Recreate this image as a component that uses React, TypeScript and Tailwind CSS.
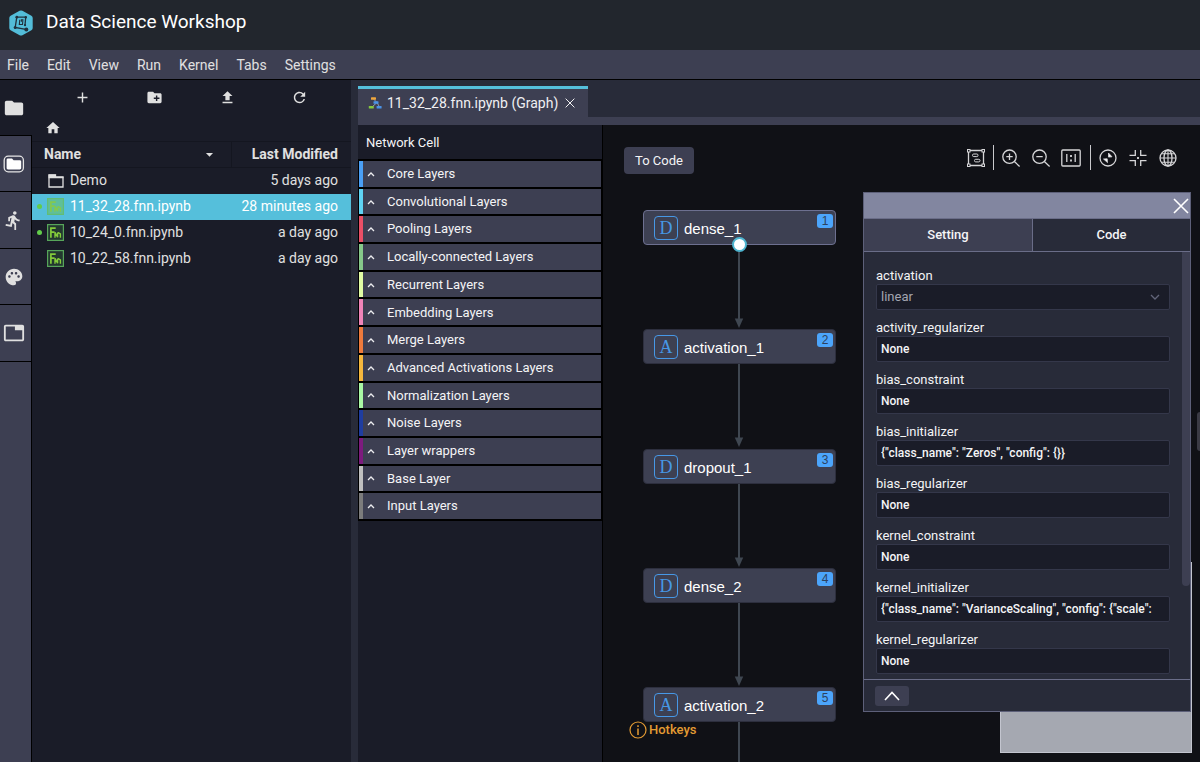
import React from "react";
import {
  MdAdd,
  MdArrowDropDown,
  MdCreateNewFolder,
  MdDirectionsRun,
  MdFileUpload,
  MdFolder,
  MdHome,
  MdPalette,
  MdRefresh,
  MdTab,
} from "react-icons/md";

const menus = ["File", "Edit", "View", "Run", "Kernel", "Tabs", "Settings"];

const files = [
  { name: "Demo", modified: "5 days ago", kind: "folder", running: false, selected: false },
  { name: "11_32_28.fnn.ipynb", modified: "28 minutes ago", kind: "fnn", running: true, selected: true },
  { name: "10_24_0.fnn.ipynb", modified: "a day ago", kind: "fnn", running: true, selected: false },
  { name: "10_22_58.fnn.ipynb", modified: "a day ago", kind: "fnn", running: false, selected: false },
];

const layers = [
  { name: "Core Layers", stripe: "bg-[#4a9ff5]" },
  { name: "Convolutional Layers", stripe: "bg-[#5fd3f3]" },
  { name: "Pooling Layers", stripe: "bg-[#ea4f66]" },
  { name: "Locally-connected Layers", stripe: "bg-[#86c88a]" },
  { name: "Recurrent Layers", stripe: "bg-[#e0fba4]" },
  { name: "Embedding Layers", stripe: "bg-[#f084b8]" },
  { name: "Merge Layers", stripe: "bg-[#ee7a3c]" },
  { name: "Advanced Activations Layers", stripe: "bg-[#f5b73d]" },
  { name: "Normalization Layers", stripe: "bg-[#a9f7a4]" },
  { name: "Noise Layers", stripe: "bg-[#1f3da0]" },
  { name: "Layer wrappers", stripe: "bg-[#7d1b7e]" },
  { name: "Base Layer", stripe: "bg-[#bfbfbf]" },
  { name: "Input Layers", stripe: "bg-[#7c7c7c]" },
];

const nodes = [
  { label: "dense_1", letter: "D", place: "top-[85px]", selected: true },
  { label: "activation_1", letter: "A", place: "top-[204px]", selected: false },
  { label: "dropout_1", letter: "D", place: "top-[324px]", selected: false },
  { label: "dense_2", letter: "D", place: "top-[443px]", selected: false },
  { label: "activation_2", letter: "A", place: "top-[562px]", selected: false },
];

const fields = [
  { name: "activity_regularizer", value: "None" },
  { name: "bias_constraint", value: "None" },
  { name: "bias_initializer", value: '{"class_name": "Zeros", "config": {}}' },
  { name: "bias_regularizer", value: "None" },
  { name: "kernel_constraint", value: "None" },
  { name: "kernel_initializer", value: '{"class_name": "VarianceScaling", "config": {"scale":' },
  { name: "kernel_regularizer", value: "None" },
];

function Logo() {
  return (
    <svg className="h-[26px] w-[26px]" viewBox="0 0 26 26" aria-hidden="true">
      <path d="M11.6.8a3 3 0 0 1 2.8 0l9 5a2.6 2.6 0 0 1 1.3 2.3v9.8a2.6 2.6 0 0 1-1.3 2.3l-9 5a3 3 0 0 1-2.8 0l-9-5a2.6 2.6 0 0 1-1.300-2.300V8.100a2.600 2.600 0 0 1 1.300-2.300z" fill="#53bdd9" />
      <g fill="none" stroke="#20303c" strokeWidth="1.300">
        <path d="M8.800 7.200l-1.600 10.300 10.600 1.900M8.800 7.200h8.900l-.7 8" />
        <path d="M11.800 9.800l-.5 4.700h3.200l.4-4.700h-1.500v2" strokeWidth="1.100" />
      </g>
      <g fill="#20303c">
        <circle cx="8.800" cy="7.200" r="1.400" />
        <circle cx="17.800" cy="7.200" r="1.200" />
        <circle cx="7.200" cy="17.600" r="1.500" />
        <circle cx="18.300" cy="19.500" r="2" />
        <circle cx="17" cy="15.200" r="1.100" />
      </g>
    </svg>
  );
}

function FramedFolder() {
  return (
    <svg className="h-[18px] w-[22px]" viewBox="0 0 22 18" aria-hidden="true">
      <rect x="1.200" y="1.200" width="19.200" height="15.600" rx="4" fill="none" stroke="#e6e6e6" strokeWidth="1.300" />
      <path d="M5 3.600h4l1.600 1.600h6.200c.8 0 1.400.6 1.400 1.300v6.600c0 .8-.6 1.400-1.400 1.400H5c-.8 0-1.400-.6-1.400-1.400V5c0-.8.6-1.400 1.400-1.400z" fill="#fff" />
    </svg>
  );
}

function OpenFolder() {
  return (
    <svg className="h-[14px] w-[16px]" viewBox="0 0 16 14" aria-hidden="true">
      <path d="M1 1h6.500v2H15v10H1z" fill="none" stroke="#e0e0e0" strokeWidth="1.300" />
      <path d="M.5.500h7.300v2.300h7.700v1.400H.5z" fill="#e0e0e0" />
    </svg>
  );
}

function FnnIcon({ faded }: { faded: boolean }) {
  return (
    <svg className="h-[17px] w-[17px]" viewBox="0 0 17 17" aria-hidden="true">
      <rect x=".6" y=".6" width="15.800" height="15.800" fill={faded ? "#5fbf9a" : "#23382f"} stroke={faded ? "#62bd74" : "#57a55a"} strokeWidth="1.200" />
      <g fill="none" stroke={faded ? "#84c94e" : "#84cc3b"} strokeWidth="1.700">
        <path d="M3.900 13.800V4.200h4.800M3.900 8.200h3.700" />
        <path d="M8 13.800V8.200l2.600 5V8.800M10.600 8.800h.8l2 1.200v3.800" strokeWidth="1.400" />
      </g>
    </svg>
  );
}

function GraphIcon() {
  return (
    <svg className="h-[14px] w-[14px]" viewBox="0 0 14 14" aria-hidden="true">
      <path d="M5 2.500l4 4M9 6.500L4 11M9 6.500l2.500 4.500" stroke="#8fa0b5" fill="none" />
      <rect x="3" y="1.200" width="5" height="2.600" rx=".6" fill="#f0a73c" />
      <rect x="5.500" y="5.200" width="5" height="2.600" rx=".6" fill="#4a93e8" />
      <rect x=".8" y="10" width="5" height="2.600" rx=".6" fill="#85c93f" />
      <rect x="8.600" y="10" width="5" height="2.600" rx=".6" fill="#4a93e8" />
    </svg>
  );
}

function Cross({ className }: { className: string }) {
  return (
    <svg className={className} viewBox="0 0 16 16" fill="none" stroke="currentColor" aria-hidden="true">
      <path d="M1 1l14 14M15 1L1 15" strokeWidth="1.600" />
    </svg>
  );
}

function ToolIcon({ label, children }: { label: string; children: React.ReactNode }) {
  return (
    <button type="button" aria-label={label} className="grid h-5 w-[22px] place-items-center">
      <svg className="h-5 w-[22px]" viewBox="0 0 22 20" fill="none" stroke="#d6d6d8" strokeWidth="1.300" aria-hidden="true">
        {children}
      </svg>
    </button>
  );
}

function CanvasTools() {
  return (
    <div className="absolute top-5 right-[21px] flex items-center">
      <ToolIcon label="Fit to canvas">
        <path d="M4 2.500h14M4 17.500h14M3.500 3v14M18.500 3v14" />
        <g fill="#101116" strokeWidth="1">
          <rect x="2.500" y="1.500" width="2.500" height="2.500" />
          <rect x="17" y="1.500" width="2.500" height="2.500" />
          <rect x="2.500" y="16" width="2.500" height="2.500" />
          <rect x="17" y="16" width="2.500" height="2.500" />
          <rect x="7.500" y="6" width="5.500" height="2.600" rx="1.200" />
          <rect x="9.500" y="11.300" width="5.500" height="2.600" rx="1.200" />
        </g>
      </ToolIcon>
      <span className="mx-1.5 h-[25px] w-px bg-[#c9c9cc]" />
      <div className="flex gap-2">
        <ToolIcon label="Zoom in">
          <circle cx="9.500" cy="8.700" r="6.700" />
          <path d="M14.400 13.500l5.200 5M6.300 8.700h6.400M9.500 5.500v6.400" />
        </ToolIcon>
        <ToolIcon label="Zoom out">
          <circle cx="9.500" cy="8.700" r="6.700" />
          <path d="M14.400 13.500l5.200 5M6.300 8.700h6.400" />
        </ToolIcon>
        <ToolIcon label="Actual size">
          <rect x="1.800" y="2" width="18.400" height="16" rx="1" />
          <path d="M6.800 6v8M15.200 6v8" />
          <path d="M11 7v2M11 11.500v2" strokeWidth="1.800" />
        </ToolIcon>
      </div>
      <span className="mr-1.5 ml-2 h-[25px] w-px bg-[#c9c9cc]" />
      <div className="flex gap-2">
        <ToolIcon label="Locate node">
          <circle cx="11" cy="10" r="8" />
          <path d="M11.500 5l3.500 3.800-3.500.3zM6.500 11l3.700-.2.300 3.800z" fill="#fff" strokeWidth=".8" />
        </ToolIcon>
        <ToolIcon label="Center">
          <path d="M2.500 7.300h5.800V2M13.700 2v5.300h5.800M2.500 12.700h5.800V18M13.700 18v-5.300h5.800" />
          <circle cx="11" cy="10" r="1" fill="#fff" stroke="none" />
        </ToolIcon>
        <ToolIcon label="Toggle map">
          <circle cx="11" cy="10" r="8" />
          <ellipse cx="11" cy="10" rx="4" ry="8" />
          <path d="M11 2v16M3 10h16M4.200 5.800h13.600M4.200 14.200h13.600" strokeWidth="1.100" />
        </ToolIcon>
      </div>
    </div>
  );
}

function FileBrowser() {
  return (
    <section className="flex w-[319px] shrink-0 flex-col bg-[#1a1c28] text-[14px] text-[#e0e0e0]">
      <div className="grid grid-cols-4 pt-2 pr-[15px] pl-[14px]">
        <button type="button" aria-label="New launcher" className="grid h-[18px] place-items-center"><MdAdd size={17} /></button>
        <button type="button" aria-label="New folder" className="grid h-[18px] place-items-center"><MdCreateNewFolder size={17} /></button>
        <button type="button" aria-label="Upload files" className="grid h-[18px] place-items-center"><MdFileUpload size={17} /></button>
        <button type="button" aria-label="Refresh" className="grid h-[18px] place-items-center"><MdRefresh size={17} /></button>
      </div>
      <div className="mt-[14px] pb-[5px] pl-[13px]">
        <a href="#home" aria-label="Home" className="block w-4"><MdHome size={16} /></a>
      </div>
      <table className="w-full table-fixed border-collapse">
        <thead>
          <tr className="h-[26px] border-y border-[#141620]">
            <th className="w-[199px] border-r border-[#141620] pr-[13px] pl-3 text-left font-bold">
              <span className="flex items-center justify-between">Name <MdArrowDropDown size={17} /></span>
            </th>
            <th className="pr-[13px] text-right font-bold">Last Modified</th>
          </tr>
        </thead>
        <tbody>
          {files.map((f) => (
            <tr key={f.name} className={f.selected ? "h-[26px] bg-[#55bfdb] text-white" : "h-[26px]"}>
              <td className="whitespace-nowrap">
                <span className="flex items-center pl-[5px]">
                  <span className={f.running ? "mr-[5px] h-[5px] w-[5px] rounded-full bg-[#62cc4a]" : "mr-[5px] h-[5px] w-[5px]"} />
                  <span className="mr-[6px] grid w-[17px] place-items-center">
                    {f.kind === "folder" ? <OpenFolder /> : <FnnIcon faded={f.selected} />}
                  </span>
                  {f.name}
                </span>
              </td>
              <td className="pr-[13px] text-right whitespace-nowrap">{f.modified}</td>
            </tr>
          ))}
        </tbody>
      </table>
    </section>
  );
}

function NetworkCell() {
  return (
    <section className="flex w-[245px] shrink-0 flex-col border-r border-black bg-[#1a1c28]">
      <h2 className="px-2 pt-2 pb-1.5 text-[13px] leading-5 text-[#f4f4f6]">Network Cell</h2>
      <ul className="grid h-[362px] auto-rows-fr border-y border-black">
        {layers.map((l) => (
          <li key={l.name} className="flex border border-black">
            <button type="button" className="flex w-full items-center bg-[#3d3f52] text-left text-[13px] text-[#f4f4f6]">
              <span className={`w-[4px] self-stretch ${l.stripe}`} />
              <svg className="mr-3 ml-1 h-2 w-2" viewBox="0 0 8 8" fill="none" stroke="#ededf0" strokeWidth="1.300" aria-hidden="true">
                <path d="M1 6l3-3 3 3" />
              </svg>
              {l.name}
            </button>
          </li>
        ))}
      </ul>
    </section>
  );
}

function SettingPanel() {
  const input = "h-[26px] w-full rounded-[2px] border border-[#34374a] bg-[#1a1c28] px-1";
  return (
    <aside className="absolute top-[67px] right-[9px] flex h-[520px] w-[328px] flex-col border border-[#5d6079] bg-[#282b39] text-[13px] text-[#f4f4f6]">
      <div className="flex h-[25px] items-center justify-end bg-[#8286a0] pr-px text-white">
        <button type="button" aria-label="Close panel"><Cross className="h-4 w-4" /></button>
      </div>
      <div className="flex h-[34px] border-y border-[#6a6d88]">
        <button type="button" className="w-[169px] border-r border-[#6a6d88] bg-[#3d3f52] font-medium">Setting</button>
        <button type="button" className="flex-1 font-medium">Code</button>
      </div>
      <div className="flex min-h-0 flex-1 overflow-hidden">
        <form className="flex-1 pt-4 pr-3 pl-3">
          <div className="mb-2.5">
            <label htmlFor="activation" className="block leading-4">activation</label>
            <div className="relative">
              <select id="activation" defaultValue="linear" className={`${input} block appearance-none text-[13px] text-[#a3a5b0]`}>
                <option>linear</option>
                <option>relu</option>
              </select>
              <svg className="pointer-events-none absolute top-2 right-2.5 h-2.5 w-2.5" viewBox="0 0 10 10" fill="none" stroke="#62657a" strokeWidth="1.300" aria-hidden="true">
                <path d="M1 3l4 4 4-4" />
              </svg>
            </div>
          </div>
          {fields.map((f) => (
            <div key={f.name} className="mb-2.5">
              <label htmlFor={f.name} className="block leading-4">{f.name}</label>
              <input id={f.name} type="text" defaultValue={f.value} className={`${input} block text-[12px] font-medium`} />
            </div>
          ))}
        </form>
        <div className="w-2">
          <div className="h-[334px] rounded-b bg-[#3d3f52]" />
        </div>
      </div>
      <div className="flex h-8 items-center border-t border-[#6a6d88] px-[11px]">
        <button type="button" aria-label="Collapse" className="grid h-5 w-[34px] place-items-center rounded-[3px] bg-[#3d3f52]">
          <svg className="h-4 w-4" viewBox="0 0 16 16" fill="none" stroke="#fff" strokeWidth="1.600" aria-hidden="true">
            <path d="M1 12l7-7.500L15 12" />
          </svg>
        </button>
      </div>
    </aside>
  );
}

function Arrow({ place }: { place: string }) {
  return (
    <svg className={`absolute left-[131px] h-[86px] w-[10px] ${place}`} viewBox="0 0 10 86" aria-hidden="true">
      <path d="M5 0v78" stroke="#3f4751" strokeWidth="2" />
      <path d="M.8 75.500h8.400L5 85z" fill="#3f4751" />
    </svg>
  );
}

function GraphCanvas() {
  return (
    <main className="relative min-w-0 flex-1 overflow-hidden bg-[#101116]">
      <button type="button" className="mt-[22px] ml-[21px] h-[27px] w-[70px] rounded bg-[#3d3f52] text-[13px] text-[#f4f4f6]">To Code</button>
      <CanvasTools />
      <Arrow place="top-[118px]" />
      <Arrow place="top-[237px]" />
      <Arrow place="top-[357px]" />
      <Arrow place="top-[476px]" />
      <Arrow place="top-[596px]" />
      {nodes.map((n, i) => (
        <div
          key={n.label}
          className={`absolute left-10 flex h-[35px] w-[193px] items-center rounded border bg-[#3d4052] pl-2.5 font-['Liberation_Sans',Arial,sans-serif] text-[15px] text-white ${n.place} ${n.selected ? "border-[#6d7090]" : "border-[#2d2f3e]"}`}
        >
          <span className="mr-1.5 grid h-6 w-6 place-items-center rounded border-[1px] border-[#4798e6] font-['Liberation_Serif',serif] text-[18px] leading-none text-[#4798e6]">{n.letter}</span>
          <span className="pt-[3px] leading-5">{n.label}</span>
          <span className="absolute top-[3px] right-0.5 grid h-[14px] w-4 place-items-center rounded-[3px] bg-[#4ca5fb] text-[12px] leading-none text-[#2c4260]">{i + 1}</span>
          {n.selected && <span className="absolute -bottom-2 left-[88px] h-[15px] w-[15px] rounded-full border-2 border-[#4db4cf] bg-white" />}
        </div>
      ))}
      <a href="#hotkeys" className="absolute top-[595px] left-[26px] flex items-center gap-0.5 text-[13px] font-medium text-[#e39b33]">
        <svg className="h-[18px] w-[18px]" viewBox="0 0 18 18" fill="none" stroke="#e39b33" strokeWidth="1.200" aria-hidden="true">
          <circle cx="9" cy="9" r="8" />
          <path d="M9 7.500v6.500M9 4.200v1.700" strokeWidth="1.500" />
        </svg>
        Hotkeys
      </a>
      <div className="absolute top-[437px] right-[8px] h-[191px] w-[192px] border border-[#c3c5cf] bg-[#a5a8b1]" />
      <SettingPanel />
      <div className="absolute top-[287px] right-0 h-[39px] w-[3px] rounded-l bg-[#3a3a44]" />
    </main>
  );
}

export default function App() {
  return (
    <div className="flex h-screen flex-col overflow-hidden bg-[#282b39] font-[Roboto,sans-serif] text-[#e0e0e0]">
      <header className="flex h-[50px] shrink-0 items-center gap-3 bg-[#22262d] pr-4 pb-[5px] pl-2">
        <Logo />
        <h1 className="text-[19px] text-white">Data Science Workshop</h1>
      </header>
      <nav className="flex h-[30px] shrink-0 items-center gap-[18px] border-b border-black bg-[#3d3f52] px-[7px] pt-px text-[14px]">
        {menus.map((m) => (
          <button key={m} type="button">{m}</button>
        ))}
      </nav>
      <div className="flex min-h-0 flex-1">
        <div className="flex w-8 shrink-0 flex-col border-r border-black bg-[#3d3f52]">
          <button type="button" aria-label="File browser" className="-mr-px grid h-14 place-items-center border-b border-black bg-[#1a1c28] pr-1"><MdFolder size={22} /></button>
          <button type="button" aria-label="Projects" className="grid h-14 place-items-center border-b border-black pr-[3px]"><FramedFolder /></button>
          <button type="button" aria-label="Running sessions" className="grid h-[57px] place-items-center border-b border-black pr-1"><MdDirectionsRun size={21} /></button>
          <button type="button" aria-label="Command palette" className="grid h-14 place-items-center border-b border-black pr-[3px]"><MdPalette size={20} /></button>
          <button type="button" aria-label="Open tabs" className="grid h-[57px] place-items-center border-b border-black pr-[3px]"><MdTab size={22} /></button>
        </div>
        <FileBrowser />
        <div className="ml-[7px] flex min-w-0 flex-1 flex-col pt-1.5">
          <div className="flex h-[31px] shrink-0">
            <div className="flex w-[230px] items-center border-t-3 border-[#55bfdb] bg-[#3d3f52] pl-[10px] text-[14px] text-[#f0f0f2]">
              <GraphIcon />
              <span className="ml-[5px] flex-1 whitespace-nowrap">11_32_28.fnn.ipynb (Graph)</span>
              <button type="button" aria-label="Close tab" className="mr-[13px]"><Cross className="h-2.5 w-2.5" /></button>
            </div>
          </div>
          <div className="h-2 shrink-0 bg-[#3d3f52]" />
          <div className="flex min-h-0 flex-1">
            <NetworkCell />
            <GraphCanvas />
          </div>
        </div>
      </div>
    </div>
  );
}
